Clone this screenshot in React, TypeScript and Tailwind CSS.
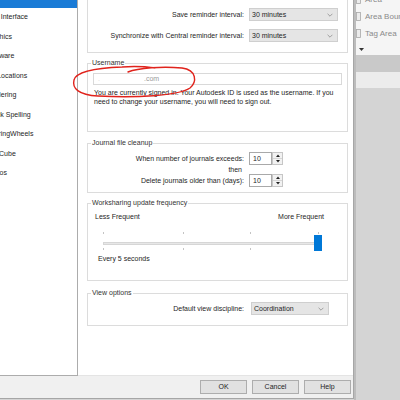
import React from "react";

const font = { fontFamily: '"Liberation Sans", Arial, sans-serif' };

const pages = [
  "General",
  "User Interface",
  "Graphics",
  "Hardware",
  "File Locations",
  "Rendering",
  "Check Spelling",
  "SteeringWheels",
  "ViewCube",
  "Macros",
];

function Chevron() {
  return (
    <svg width="6" height="4" viewBox="0 0 6 4" className="shrink-0">
      <path d="M0.6 0.8 L3 3.2 L5.4 0.8" fill="none" stroke="#8c8c8c" strokeWidth="0.8" />
    </svg>
  );
}

function Select({ value, width }: { value: string; width: string }) {
  return (
    <div
      className={`flex h-[13px] items-center justify-between border border-[#cfcfcf] bg-[#e5e5e5] pl-[2px] pr-[4px] ${width}`}
    >
      <span>{value}</span>
      <Chevron />
    </div>
  );
}

function Spinner({ value }: { value: string }) {
  return (
    <div className="flex h-[13px]">
      <div className="flex w-[23px] items-center border border-[#a9a9a9] bg-white pl-[3px]">{value}</div>
      <div className="flex w-[11px] flex-col border border-[#c6c6c6] bg-[#f2f2f2]">
        <div className="flex flex-1 items-center justify-center border-b border-[#d6d6d6]">
          <svg width="4" height="3" viewBox="0 0 4 3">
            <path d="M0 3 L2 0.5 L4 3 Z" fill="#222" />
          </svg>
        </div>
        <div className="flex flex-1 items-center justify-center">
          <svg width="4" height="3" viewBox="0 0 4 3">
            <path d="M0 0 L2 2.5 L4 0 Z" fill="#222" />
          </svg>
        </div>
      </div>
    </div>
  );
}

function Group({ title, className, children }: { title: string; className: string; children: React.ReactNode }) {
  return (
    <fieldset className={`border border-[#dcdcdc] bg-white ${className}`}>
      <legend className="ml-[3px] px-[1px] text-[7px] leading-[8px] text-[#333]">{title}</legend>
      {children}
    </fieldset>
  );
}

function Tick() {
  return <div className="h-[2px] w-[1px] bg-[#c4c4c4]" />;
}

function Slider() {
  const ticks = [0, 80, 147, 215];
  return (
    <div className="relative ml-[15px] mr-[28px] h-[34px]">
      {ticks.map((x) => (
        <div key={x} className="absolute top-[11px] flex h-[18px] flex-col justify-between" style={{ left: x }}>
          <Tick />
          <Tick />
        </div>
      ))}
      <div className="absolute left-0 right-0 top-[21px] h-[3px] border border-[#d6d6d6] bg-[#e7e7e7]" />
      <div className="absolute left-[211px] top-[14px] h-[16px] w-[8px] bg-[#0078d7]" />
    </div>
  );
}

function RibbonItem({ label }: { label: string }) {
  return (
    <div className="flex h-[17px] items-center gap-[4px] whitespace-nowrap">
      <svg width="5" height="9" viewBox="0 0 5 9" className="shrink-0">
        <rect x="0.5" y="0.5" width="4" height="8" fill="#ececec" stroke="#a8a8a8" strokeWidth="0.8" />
      </svg>
      <span className="text-[8px] text-[#8a8a8a]">{label}</span>
    </div>
  );
}

export default function App() {
  return (
    <div className="relative flex h-[400px] w-[400px] overflow-hidden bg-[#d4d4d4] text-[7px] leading-[8px] text-[#1e1e1e]" style={font}>
      {/* Options dialog */}
      <div className="flex h-[399px] w-[354px] shrink-0 flex-col border-b border-r border-[#a6a6a6] bg-[#f0f0f0]">
        <div className="flex h-[376px]">
          <div className="w-[78px] shrink-0 overflow-hidden border-b border-r border-[#acacac] bg-white">
            <div className="-mt-[12px]">
              {pages.map((p, i) => (
                <div
                  key={p}
                  className={
                    i === 0
                      ? "flex h-[19.5px] items-start bg-[#1a7bd6] pt-[1px] text-white"
                      : "flex h-[19.5px] items-center whitespace-nowrap"
                  }
                >
                  <span className="-ml-[16px] whitespace-nowrap">{p}</span>
                </div>
              ))}
            </div>
          </div>

          <div className="flex flex-1 flex-col overflow-hidden border-b border-[#e4e4e4] bg-white pl-[9px] pr-[5px]">
            {/* Reminder intervals */}
            <div className="-mt-[8px] flex flex-col gap-[8px] border border-[#dcdcdc] pb-[10px] pt-[15px]">
              <div className="flex items-center gap-[5px]">
                <div className="w-[156px] text-right">Save reminder interval:</div>
                <Select value="30 minutes" width="w-[89px]" />
              </div>
              <div className="flex items-center gap-[5px]">
                <div className="w-[156px] whitespace-nowrap text-right">Synchronize with Central reminder interval:</div>
                <Select value="30 minutes" width="w-[89px]" />
              </div>
            </div>

            <Group title="Username" className="mt-[6px]">
              <div className="px-[5px] pb-[25px] pt-[6px]">
                <div className="flex h-[12px] items-center border border-[#d9d9d9] bg-white pl-[4px] text-[#9a9a9a]">
                  <span className="text-[#d8d8d8]">.</span>
                  <span className="ml-[44px]">.com</span>
                </div>
                <p className="mt-[3px] pl-[1px] leading-[9px]">
                  You are currently signed in. Your Autodesk ID is used as the username. If you
                  <br />
                  need to change your username, you will need to sign out.
                </p>
              </div>
            </Group>

            <Group title="Journal file cleanup" className="mt-[7px]">
              <div className="flex flex-col pb-[5px] pt-[5px]">
                <div className="flex items-center gap-[5px]">
                  <div className="w-[156px] text-right">When number of journals exceeds:</div>
                  <Spinner value="10" />
                </div>
                <div className="flex h-[9px] items-center">
                  <div className="w-[154px] text-right">then</div>
                </div>
                <div className="flex items-center gap-[5px]">
                  <div className="w-[156px] text-right">Delete journals older than (days):</div>
                  <Spinner value="10" />
                </div>
              </div>
            </Group>

            <Group title="Worksharing update frequency" className="mt-[6px]">
              <div className="pb-[17px] pt-[6px]">
                <div className="flex justify-between pl-[7px] pr-[23px]">
                  <span>Less Frequent</span>
                  <span>More Frequent</span>
                </div>
                <Slider />
                <div className="pl-[10px]">Every 5 seconds</div>
              </div>
            </Group>

            <Group title="View options" className="mt-[8px]">
              <div className="flex items-center gap-[7px] pb-[10px] pt-[5px]">
                <div className="w-[156px] text-right">Default view discipline:</div>
                <Select value="Coordination" width="w-[78px]" />
              </div>
            </Group>
          </div>
        </div>

        <div className="flex flex-1 items-center justify-end gap-[5px] pr-[2px]">
          {["OK", "Cancel", "Help"].map((b) => (
            <button
              key={b}
              className="flex h-[14px] w-[47px] items-center justify-center border border-[#adadad] bg-[#e1e1e1] text-[7px] leading-[8px]"
            >
              {b}
            </button>
          ))}
        </div>
      </div>

      {/* Revit window behind */}
      <div className="flex flex-1 flex-col overflow-hidden border-l-2 border-[#bcbcbc]">
        <div className="flex h-[55px] flex-col overflow-hidden bg-[#f5f5f5]">
          <div className="-mt-[9px]">
            <RibbonItem label="Area" />
            <RibbonItem label="Area Boundary" />
            <RibbonItem label="Tag Area" />
          </div>
          <div className="pl-[3px] pt-[6px]">
            <svg width="5" height="3" viewBox="0 0 5 3">
              <path d="M0 0 L5 0 L2.5 3 Z" fill="#333" />
            </svg>
          </div>
        </div>
        <div className="h-[17px] bg-[#c9c9c9]" />
        <div className="h-[16px] bg-[#ececec]" />
        <div className="flex-1 bg-[#d4d4d4]" />
      </div>

      {/* Red hand-drawn annotation */}
      <svg className="pointer-events-none absolute left-0 top-0" width="400" height="400" viewBox="0 0 400 400">
        <path
          d="M128 72 C138 68 162 66 182 68 C197 70 197 82 190 88 C178 96 135 98 98 96 C78 95 72 88 74 80 C76 72 96 68 122 67 C136 66 148 67 155 68"
          fill="none"
          stroke="#e0231c"
          strokeWidth="1.4"
          strokeLinecap="round"
        />
      </svg>
    </div>
  );
}
